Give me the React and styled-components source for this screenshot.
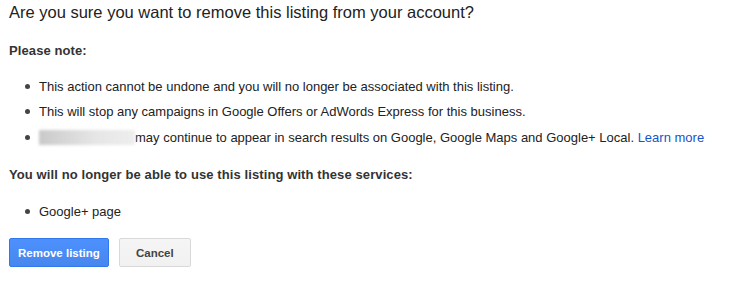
import React from "react";
import styled, { createGlobalStyle } from "styled-components";

const Global = createGlobalStyle`
    body {
        margin: 0;
        background: #fff;
        font-family: Arial, "Liberation Sans", sans-serif;
        color: #222;
    }
`;

const Content = styled.div`
    padding: 0 9px;
`;

const Title = styled.h1`
    margin: 0;
    font-size: 16.5px;
    font-weight: normal;
    line-height: 24px;
    color: #222;
`;

const Note = styled.div`
    margin-top: ${(p) => p.$top || "18px"};
    font-size: 13px;
    font-weight: bold;
    line-height: 17px;
    letter-spacing: 0.1px;
    color: #333;
`;

const List = styled.ul`
    list-style: none;
    margin: ${(p) => p.$top || "18.5px"} 0 0;
    padding: 0 0 0 30px;
`;

const Item = styled.li`
    position: relative;
    font-size: 13px;
    line-height: 17px;
    margin-bottom: 8.5px;
    color: #222;

    &:last-child {
        margin-bottom: 0;
    }

    &::before {
        content: "";
        position: absolute;
        left: -14px;
        top: 6px;
        width: 5px;
        height: 5px;
        border-radius: 50%;
        background: #444;
    }
`;

const Blurred = styled.span`
    display: inline-block;
    width: 96px;
    height: 15px;
    vertical-align: -3px;
    background: linear-gradient(to right, #c9c9c9, #d8d8d8 30%, #e6e6e6 60%, #eeeeee);
    filter: blur(1.5px);
`;

const Link = styled.a`
    color: #1155cc;
    text-decoration: none;
`;

const Buttons = styled.div`
    display: flex;
    gap: 10px;
    margin-top: 18.5px;
`;

const Button = styled.button`
    height: 29px;
    min-width: ${(p) => (p.$primary ? "0" : "72px")};
    padding: 0 8px;
    box-sizing: border-box;
    border-radius: 2px;
    font-family: Arial, "Liberation Sans", sans-serif;
    font-size: 11.5px;
    font-weight: bold;
    border: 1px solid ${(p) => (p.$primary ? "#3079ed" : "#d9d9d9")};
    background: ${(p) =>
        p.$primary
            ? "linear-gradient(#4d90fe, #4787ed)"
            : "linear-gradient(#f5f5f5, #f1f1f1)"};
    color: ${(p) => (p.$primary ? "#fff" : "#444")};
    cursor: pointer;
`;

export default function App() {
    return (
        <>
            <Global />
            <Content>
                <Title>Are you sure you want to remove this listing from your account?</Title>
                <Note>Please note:</Note>
                <List>
                    <Item>This action cannot be undone and you will no longer be associated with this listing.</Item>
                    <Item>This will stop any campaigns in Google Offers or AdWords Express for this business.</Item>
                    <Item>
                        <Blurred />may continue to appear in search results on Google, Google Maps and Google+ Local.{" "}
                        <Link href="#">Learn more</Link>
                    </Item>
                </List>
                <Note $top="20px">You will no longer be able to use this listing with these services:</Note>
                <List $top="20px">
                    <Item>Google+ page</Item>
                </List>
                <Buttons>
                    <Button $primary>Remove listing</Button>
                    <Button>Cancel</Button>
                </Buttons>
            </Content>
        </>
    );
}
